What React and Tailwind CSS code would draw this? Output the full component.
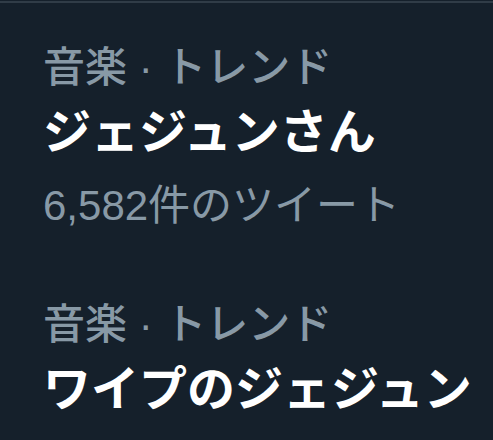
const trends = [
  { category: "音楽 · トレンド", name: "ジェジュンさん", count: "6,582件のツイート" },
  { category: "音楽 · トレンド", name: "ワイプのジェジュン" },
];

const font = { fontFamily: '"Liberation Sans", "Noto Sans CJK JP", sans-serif' };

function TrendItem({ trend }) {
  return (
    <div className="pl-[43px]">
      <div className="text-[42px] leading-[56px] font-medium text-[#8899a6] whitespace-nowrap">{trend.category}</div>
      <div className="text-[48px] leading-[74px] font-bold text-white whitespace-nowrap">{trend.name}</div>
      {trend.count && (
        <div className="text-[42px] leading-[72px] text-[#8899a6] whitespace-nowrap">{trend.count}</div>
      )}
    </div>
  );
}

export default function App() {
  return (
    <div className="w-[493px] h-[440px] bg-[#15202b] overflow-hidden" style={font}>
      <div className="pt-px">
        <div className="h-[2px] bg-[#303c47]" />
      </div>
      <div className="flex flex-col gap-[55px] pt-[37px]">
        {trends.map((t, i) => (
          <TrendItem key={i} trend={t} />
        ))}
      </div>
    </div>
  );
}
